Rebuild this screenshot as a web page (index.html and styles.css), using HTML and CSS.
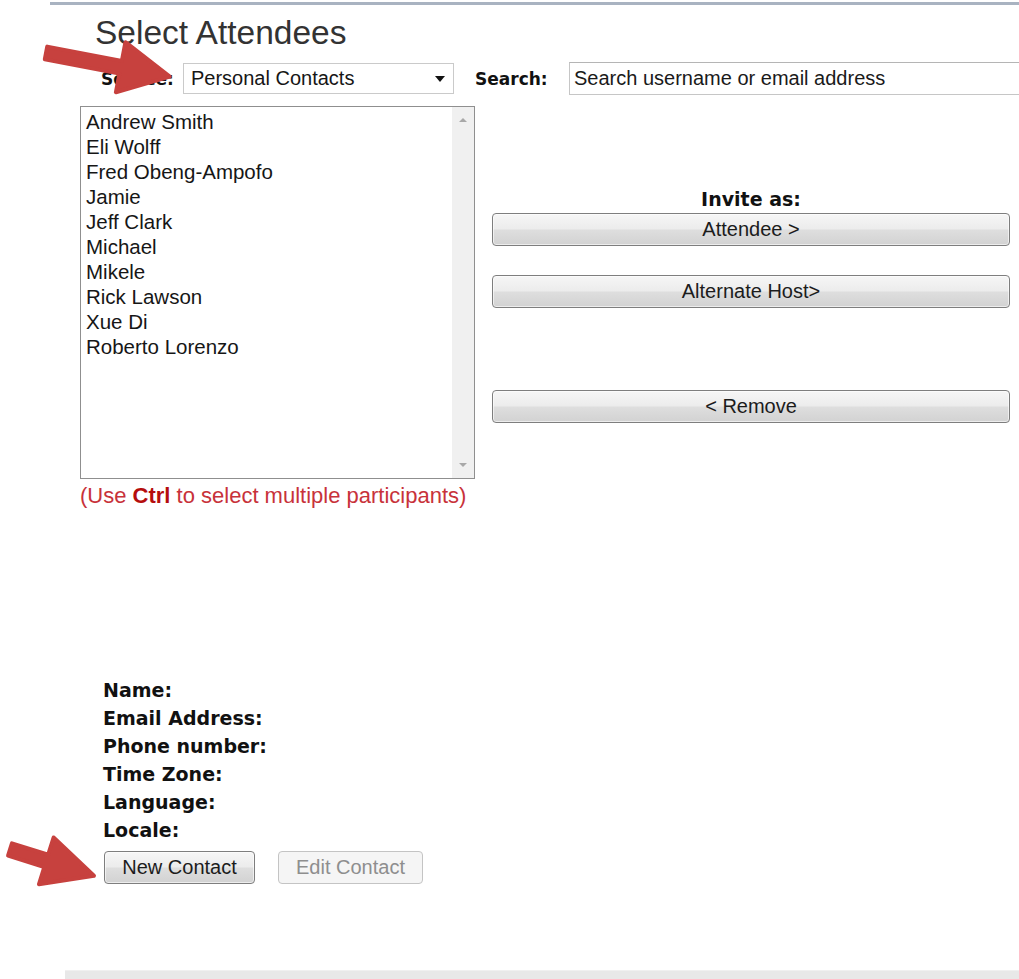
FILE: index.html
```html
<!DOCTYPE html>
<html lang="en">
<head>
    <meta charset="UTF-8">
    <meta name="viewport" content="width=device-width, initial-scale=1.0">
    <title>Select Attendees</title>
    <link rel="stylesheet" href="styles.css">
</head>
<body>
    <div class="page">
        <h1 class="title">Select Attendees</h1>

        <div class="toolbar">
            <span class="label src-label">Source:</span>
            <div class="dropdown">
                <span>Personal Contacts</span>
                <span class="caret"></span>
            </div>
            <span class="label search-label">Search:</span>
            <input class="search" type="text" value="Search username or email address">
        </div>

        <div class="main">
            <div class="left">
                <div class="listbox">
                    <ul class="items">
                        <li>Andrew Smith</li>
                        <li>Eli Wolff</li>
                        <li>Fred Obeng-Ampofo</li>
                        <li>Jamie</li>
                        <li>Jeff Clark</li>
                        <li>Michael</li>
                        <li>Mikele</li>
                        <li>Rick Lawson</li>
                        <li>Xue Di</li>
                        <li>Roberto Lorenzo</li>
                    </ul>
                    <div class="scrollbar">
                        <span class="arrow-up"></span>
                        <span class="arrow-down"></span>
                    </div>
                </div>
                <p class="hint">(Use <b>Ctrl</b> to select multiple participants)</p>
            </div>

            <div class="right">
                <div class="invite">Invite as:</div>
                <button class="btn wide first">Attendee &gt;</button>
                <button class="btn wide second">Alternate Host&gt;</button>
                <button class="btn wide third">&lt; Remove</button>
            </div>
        </div>

        <div class="details">
            <div class="label">Name:</div>
            <div class="label">Email Address:</div>
            <div class="label">Phone number:</div>
            <div class="label">Time Zone:</div>
            <div class="label">Language:</div>
            <div class="label">Locale:</div>
            <div class="actions">
                <button class="btn new">New Contact</button>
                <button class="btn edit" disabled>Edit Contact</button>
            </div>
        </div>
    </div>
    <div class="bottom-bar"></div>

    <!-- callout arrows drawn over the screenshot -->
    <svg class="callouts" width="1019" height="979" viewBox="0 0 1019 979">
        <g transform="translate(46,53) rotate(10.8)">
            <polygon class="arrow" points="0,-6.5 76,-6.5 76,-25.5 126,0 76,25.5 76,6.5 0,6.5"/>
        </g>
        <g transform="translate(10,849.5) rotate(17.4)">
            <polygon class="arrow" points="0,-6.5 38,-6.5 38,-24.5 88,0 38,24.5 38,6.5 0,6.5"/>
        </g>
    </svg>
</body>
</html>
```

FILE: styles.css
```css
html, body {
    overflow: hidden;
}
body {
    margin: 0;
    padding: 0;
    background-color: #fff;
    font-family: "Liberation Sans", Arial, sans-serif;
    font-size: 20px;
    color: #161616;
}
.page {
    margin-left: 50px;
    margin-top: 2px;
    border-top: 3px solid #a9b3c1;
}
.title {
    margin: 10px 0 0 45px;
    font-size: 33.5px;
    line-height: 36px;
    font-weight: normal;
    color: #333;
}
.label {
    font-family: "DejaVu Sans", Verdana, sans-serif;
    font-weight: bold;
    color: #111;
}
.toolbar {
    display: flex;
    align-items: center;
    margin-top: 11px;
    padding-left: 51px;
    height: 33px;
}
.toolbar > * {
    flex: none;
}
.toolbar .label {
    font-size: 17px;
}
.src-label {
    width: 82px;
}
.dropdown {
    box-sizing: border-box;
    width: 271px;
    height: 31px;
    border: 1px solid #cacaca;
    padding: 0 8px 0 7px;
    display: flex;
    align-items: center;
    justify-content: space-between;
    line-height: 29px;
}
.caret {
    width: 0;
    height: 0;
    border-left: 5px solid transparent;
    border-right: 5px solid transparent;
    border-top: 6px solid #111;
}
.search-label {
    margin-left: 21px;
    width: 94px;
}
.search {
    box-sizing: border-box;
    width: 470px;
    height: 33px;
    border: 1px solid #c6c6c6;
    border-top-color: #b5b5b5;
    padding: 0 4px;
    font-family: "Liberation Sans", Arial, sans-serif;
    font-size: 20px;
    color: #1a1a1a;
    outline: none;
}
.main {
    display: flex;
    margin-top: 11px;
    padding-left: 30px;
}
.left {
    width: 395px;
}
.listbox {
    box-sizing: border-box;
    height: 373px;
    border: 1px solid #8f8f8f;
    display: flex;
}
.items {
    flex: 1;
    list-style: none;
    margin: 0;
    padding: 2px 0 0 5px;
    font-size: 20.5px;
    line-height: 25px;
}
.scrollbar {
    width: 22px;
    background-color: #f0f0f0;
    display: flex;
    flex-direction: column;
    justify-content: space-between;
    align-items: center;
    padding: 11px 0 11px;
}
.arrow-up, .arrow-down {
    width: 0;
    height: 0;
    border-left: 4px solid transparent;
    border-right: 4px solid transparent;
}
.arrow-up {
    border-bottom: 4px solid #a8a8a8;
}
.arrow-down {
    border-top: 4px solid #a8a8a8;
}
.hint {
    margin: 4px 0 0;
    font-size: 22px;
    line-height: 25px;
    color: #c8323a;
    white-space: nowrap;
}
.hint b {
    color: #b50d0d;
}
.right {
    width: 518px;
    margin-left: 17px;
    padding-top: 82px;
    display: flex;
    flex-direction: column;
}
.invite {
    font-family: "DejaVu Sans", Verdana, sans-serif;
    font-weight: bold;
    font-size: 19px;
    line-height: 22px;
    text-align: center;
    color: #111;
}
.btn {
    box-sizing: border-box;
    height: 33px;
    border: 1px solid #7e7e7e;
    border-radius: 4px;
    background: linear-gradient(#f6f6f6, #ececec 48%, #dedede 52%, #d2d2d2);
    box-shadow: inset 0 0 0 1px rgba(255, 255, 255, 0.6);
    font-family: "Liberation Sans", Arial, sans-serif;
    font-size: 20px;
    color: #1c1c1c;
    padding: 0;
}
.wide {
    width: 518px;
}
.first {
    margin-top: 3px;
}
.second {
    margin-top: 29px;
}
.third {
    margin-top: 82px;
}
.details {
    margin-top: 168px;
    padding-left: 53px;
}
.details .label {
    font-size: 19px;
    line-height: 28px;
}
.actions {
    display: flex;
    margin-top: 7px;
    padding-left: 1px;
}
.new {
    width: 151px;
}
.edit {
    width: 145px;
    margin-left: 23px;
    border-color: #c4c4c4;
    background: #f5f5f5;
    box-shadow: none;
    color: #8e8e8e;
}
.bottom-bar {
    margin: 86px 0 0 65px;
    height: 8px;
    border-top: 1px solid #f0f0f0;
    background-color: #e8e8e8;
}
.callouts {
    position: absolute;
    left: 0;
    top: 0;
    pointer-events: none;
}
.arrow {
    fill: #c7413e;
    stroke: #c7413e;
    stroke-width: 4;
    stroke-linejoin: round;
}
```
